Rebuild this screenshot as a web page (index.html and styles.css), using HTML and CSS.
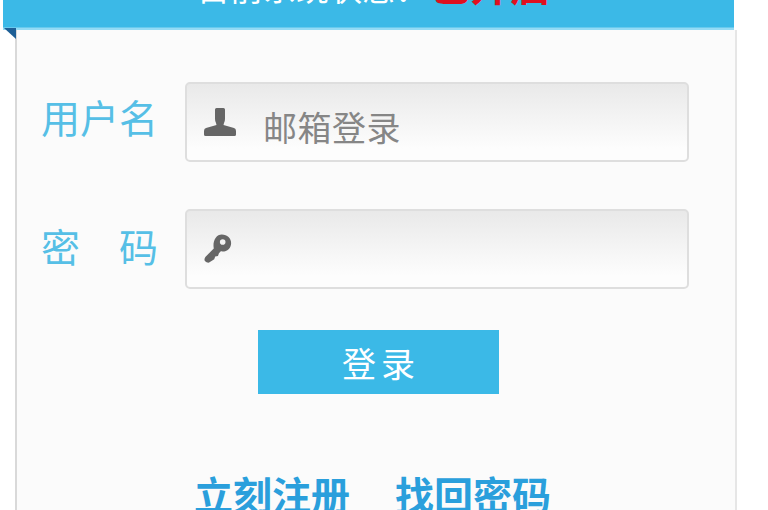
FILE: index.html
```html
<!DOCTYPE html>
<html lang="zh">
<head>
<meta charset="utf-8">
<title>登录</title>
<link rel="stylesheet" href="styles.css">
</head>
<body>
<div class="page">
  <header class="banner">
    <div class="status">目前系统状态：<span class="status-on">已开启</span></div>
    <i class="fold"></i>
  </header>
  <main class="panel">
    <form class="form">
      <div class="row">
        <label class="label">用户名</label>
        <div class="field">
          <svg class="icon" viewBox="0 0 32 28"><path d="M11 1.500q0-1.500 1.500-1.500h7q1.500 0 1.500 1.500V11q0 2-1 4l-.5 2 10.500 3q2 .6 2 3v3.500q0 1.500-1.500 1.500H1.500Q0 28 0 26.500V23q0-2.400 2-3l10.500-3-.5-2q-1-2-1-4z" fill="#666"/></svg>
          <span class="placeholder">邮箱登录</span>
        </div>
      </div>
      <div class="row">
        <label class="label label-wide"><span>密</span><span>码</span></label>
        <div class="field">
          <svg class="icon icon-key" viewBox="0 0 32 32"><path d="M20 1c6 0 10 4 10 9 0 6-5 10-11 9l-2 2-1 3-3 .5-1 3-5.500 3.500q-3.500.5-5-2.500 0-2 1-3.500l9-9C10 8 14 1 20 1zm1 5a3 3 0 1 0 0 6 3 3 0 0 0 0-6z" fill="#666" fill-rule="evenodd"/></svg>
        </div>
      </div>
      <div class="actions"><button type="button" class="submit">登录</button></div>
      <div class="links"><a class="link">立刻注册</a><a class="link">找回密码</a></div>
    </form>
  </main>
</div>
</body>
</html>
```
FILE: styles.css
```css
html, body { margin: 0; padding: 0; background: #fff; }
body { width: 768px; height: 510px; overflow: hidden; font-family: "Noto Sans CJK SC", sans-serif; }
.page { padding-left: 3px; width: 733px; height: 510px; position: relative; }
.banner { height: 30px; margin-right: 2px; background: linear-gradient(#3bb9e7 0 27px, #93dbf5 28px); position: relative; }
.status { position: absolute; left: 194px; top: -36px; white-space: nowrap; font-size: 33px; line-height: 40px; color: #fff; }
.status-on { margin-left: 2px; font-size: 40px; color: #e0101f; font-weight: 700; }
.fold { position: absolute; left: 1px; top: 28px; width: 0; height: 0; border-top: 11px solid #1e5f96; border-left: 12px solid transparent; }
.panel { margin-left: 12px; height: 480px; background: #fbfbfb; border-left: 2px solid #d9d9d9; border-right: 2px solid #e6e6e6; box-sizing: border-box; width: 722px; }
.form { padding: 52px 0 0 24px; }
.row { display: flex; align-items: center; height: 80px; margin-bottom: 47px; }
.label { width: 117px; margin-top: -12px; margin-right: 27px; font-size: 39px; line-height: 44px; color: #56bfe6; display: block; white-space: nowrap; }
.label-wide { display: flex; justify-content: space-between; margin-top: -8px; }
.field { width: 504px; height: 80px; box-sizing: border-box; border: 2px solid #dedede; border-radius: 5px; background: linear-gradient(#e9e9e9, #fdfdfd 85%); display: flex; align-items: center; padding-left: 17px; }
.icon { width: 32px; height: 28px; flex: none; }
.icon-key { width: 30px; height: 31px; margin-left: -1px; margin-top: -2px; }
.placeholder { margin-left: 27px; margin-top: 10px; font-size: 34px; letter-spacing: .5px; line-height: 40px; color: #868686; }
.actions { margin-top: -6px; padding-left: 217px; }
.submit { display: block; width: 241px; height: 64px; border: 0; background: #3bb9e7; color: #fff; font-size: 34px; padding: 0 0 0 5px; font-family: inherit; letter-spacing: 5px; }
.links { margin-top: 74px; padding-left: 153px; display: flex; gap: 45px; white-space: nowrap; }
.link { font-size: 39px; line-height: 50px; font-weight: 700; color: #2a9fdc; }
```
